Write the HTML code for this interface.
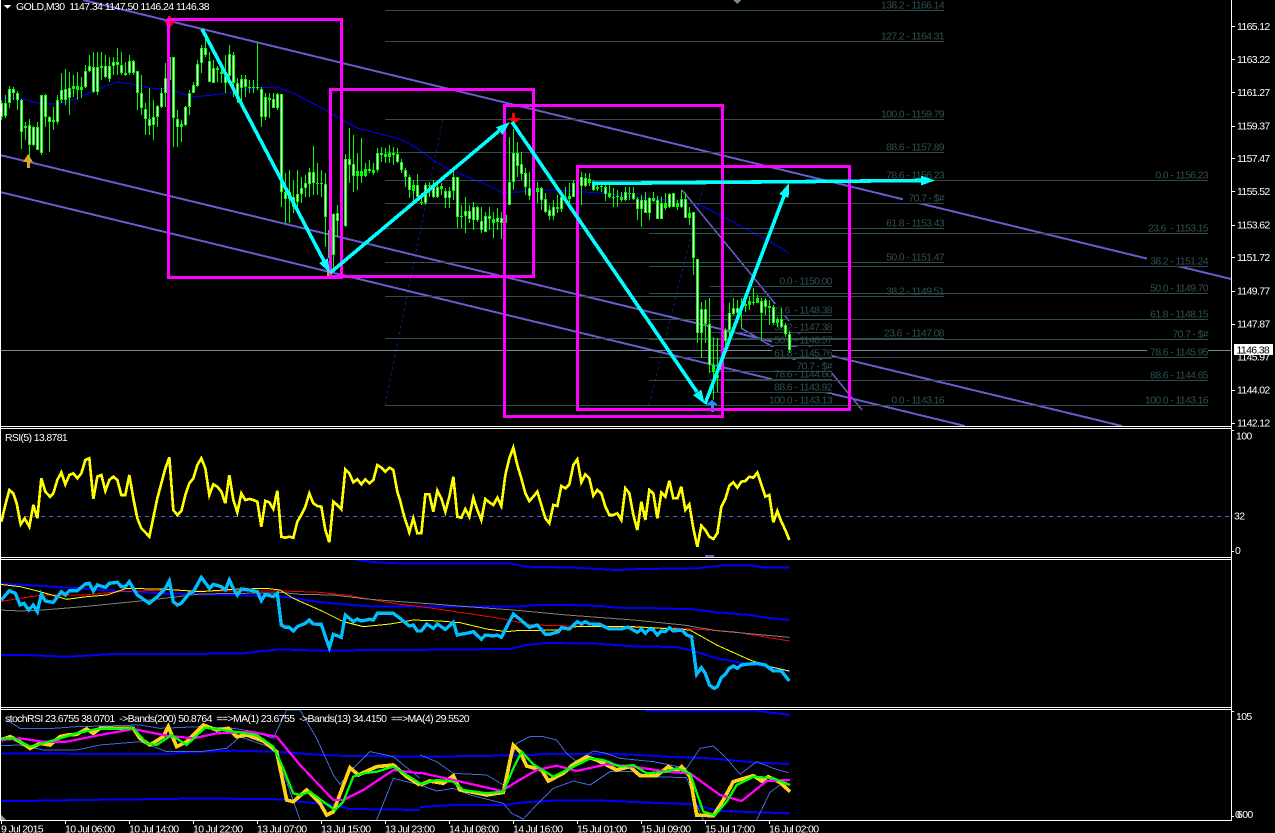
<!DOCTYPE html>
<html><head><meta charset="utf-8"><title>GOLD,M30</title>
<style>
html,body{margin:0;padding:0;background:#000;overflow:hidden}
svg{display:block}
text{font-family:"Liberation Sans",sans-serif;font-size:10.5px;letter-spacing:-.65px;fill:#fff;white-space:pre}
.f text{fill:#2F4F4F}
.f rect{fill:#000}
.e text{text-anchor:end}
path,polyline,line{fill:none}
</style></head><body>
<svg width="1275" height="833" viewBox="0 0 1275 833" xmlns="http://www.w3.org/2000/svg" shape-rendering="crispEdges">
<defs>
<clipPath id="m"><rect x="1" y="0" width="1230" height="426"/></clipPath>
</defs>
<rect width="1275" height="833" fill="#000"/>
<g clip-path="url(#m)">
<!-- dotted fan lines -->
<g stroke="#191970" stroke-dasharray="3 3" fill="none">
<path d="M385 405L443 119"/><path d="M649 405L703 187"/><path d="M712 405L732 287"/>
</g>
<!-- MA line -->
<polyline stroke="#0000ff" points="0,98 20,98 37,103 53,104 67,102 80,97 100,88 117,82 133,84 150,88 163,89 177,92 193,97 213,95 233,92 253,88 277,87 293,93 320,107 337,117 357,128 377,133 400,139 417,148 433,160 450,170 483,183 503,193 533,191 550,190 600,193 633,197 667,200 700,205 733,222 767,240 789,253"/>
<!-- channels -->
<g stroke="#6A5ACD" stroke-width="2">
<line x1="83" y1="0" x2="1231" y2="279"/>
<line x1="0" y1="155" x2="1122" y2="426"/>
<line x1="0" y1="192" x2="965" y2="426"/>
<line stroke-width="1.6" x1="682" y1="190" x2="862" y2="410"/>
<line stroke-width="1.6" x1="741" y1="328" x2="805" y2="366"/>
</g>
<g stroke="#0000ff"><path d="M797 334h3M808 347h3"/></g>
<!-- price line -->
<line x1="0" y1="350.5" x2="1231" y2="350.5" stroke="#778899"/>
<!-- fib labels backgrounds + text -->
<g class="f">
<rect x="879" y="0" width="65" height="10"/><rect x="879" y="30" width="65" height="11"/><rect x="879" y="108" width="65" height="11"/><rect x="884" y="141" width="60" height="11"/><rect x="884" y="169" width="60" height="11"/><rect x="903" y="192" width="41" height="11"/><rect x="884" y="217" width="60" height="11"/><rect x="884" y="251" width="60" height="11"/><rect x="884" y="285" width="60" height="11"/><rect x="881" y="327" width="63" height="11"/><rect x="888" y="394" width="56" height="11"/>
<rect x="1153" y="169" width="55" height="11"/><rect x="1145" y="222" width="63" height="11"/><rect x="1147" y="255" width="61" height="11"/><rect x="1147" y="282" width="61" height="11"/><rect x="1147" y="308" width="61" height="11"/><rect x="1167" y="328" width="41" height="11"/><rect x="1147" y="346" width="61" height="11"/><rect x="1147" y="369" width="61" height="11"/><rect x="1143" y="394" width="65" height="11"/>
<rect x="777" y="275" width="55" height="11"/><rect x="772" y="304" width="60" height="11"/><rect x="772" y="321" width="60" height="11"/><rect x="772" y="334" width="60" height="11"/><rect x="772" y="347" width="60" height="11"/><rect x="791" y="360" width="41" height="11"/><rect x="772" y="368" width="60" height="11"/><rect x="772" y="381" width="60" height="11"/><rect x="767" y="394" width="65" height="11"/>
<g stroke="#2F4F4F" fill="none">
<path d="M385 10.5H944M385 41.5H944M385 119.5H944M385 152.5H944M385 180.5H944M385 203.5H944M385 228.5H944M385 262.5H944M385 296.5H944M385 338.5H944M385 405.5H944"/>
<path d="M649 180.5H1208M649 233.5H1208M649 266.5H1208M649 293.5H1208M649 319.5H1208M649 339.5H1208M649 357.5H1208M649 380.5H1208M649 405.5H1208"/>
<path d="M710 286.5H832M710 315.5H832M710 332.5H832M710 345.5H832M710 358.5H832M710 371.5H832M710 379.5H832M710 392.5H832M710 405.5H832"/>
</g>
<g class="e">
<text x="944" y="8.5">138.2 - 1166.14</text><text x="944" y="39.5">127.2 - 1164.31</text><text x="944" y="117.5">100.0 - 1159.79</text><text x="944" y="150.5">88.6 - 1157.89</text><text x="944" y="178.5">78.6 - 1156.23</text><text x="944" y="201.5">70.7 - $#</text><text x="944" y="226.5">61.8 - 1153.43</text><text x="944" y="260.5">50.0 - 1151.47</text><text x="944" y="294.5">38.2 - 1149.51</text><text x="944" y="336.5">23.6  - 1147.08</text><text x="944" y="403.5">0.0 - 1143.16</text>
<text x="1208" y="178.5">0.0 - 1156.23</text><text x="1208" y="231.5">23.6  - 1153.15</text><text x="1208" y="264.5">38.2 - 1151.24</text><text x="1208" y="291.5">50.0 - 1149.70</text><text x="1208" y="317.5">61.8 - 1148.15</text><text x="1208" y="337.5">70.7 - $#</text><text x="1208" y="355.5">78.6 - 1145.95</text><text x="1208" y="378.5">88.6 - 1144.65</text><text x="1208" y="403.5">100.0 - 1143.16</text>
<text x="832" y="284.5">0.0 - 1150.00</text><text x="832" y="313.5">23.6  - 1148.38</text><text x="832" y="330.5">38.2 - 1147.38</text><text x="832" y="343.5">50.0 - 1146.57</text><text x="832" y="356.5">61.8 - 1145.76</text><text x="832" y="369.5">70.7 - $#</text><text x="832" y="377.5">78.6 - 1144.60</text><text x="832" y="390.5">88.6 - 1143.92</text><text x="832" y="403.5">100.0 - 1143.13</text>
</g>
</g>
<!-- wicks -->
<path stroke="#00ff00" stroke-width="1" d="M1.5 100V120M5.5 95V118M9.5 86V108M13.5 87V100M17.5 91V110M21.5 99V149M25.5 122V140M29.5 119V157M33.5 126V146M37.5 122V150M41.5 95V155M45.5 94V127M49.5 116V152M53.5 107V130M57.5 95V124M61.5 73V103M65.5 69V105M69.5 72V115M73.5 75V97M77.5 72V100M81.5 77V98M85.5 65V88M89.5 55V72M93.5 52V93M97.5 52V95M101.5 52V80M105.5 55V78M109.5 57V82M113.5 57V75M117.5 48V75M121.5 52V75M125.5 62V76M129.5 55V75M133.5 60V75M137.5 71V110M141.5 75V115M145.5 103V135M149.5 88V135M153.5 100V140M157.5 105V127M161.5 88V108M165.5 63V107M169.5 57V100M173.5 57V147M177.5 110V147M181.5 120V142M185.5 106V126M189.5 90V115M193.5 82V93M197.5 60V87M201.5 45V73M205.5 35V57M209.5 52V82M213.5 60V83M217.5 66V82M221.5 62V83M225.5 55V93M229.5 45V83M233.5 52V97M237.5 78V103M241.5 75V103M245.5 75V97M249.5 80V93M253.5 80V93M257.5 43V90M261.5 87V127M265.5 93V120M269.5 93V118M273.5 93V108M277.5 93V110M281.5 94V207M285.5 173V223M289.5 170V223M293.5 180V213M297.5 170V207M301.5 177V203M305.5 175V197M309.5 168V197M313.5 146V195M317.5 163V195M321.5 170V197M325.5 173V247M329.5 200V260M333.5 213V268M337.5 205V237M341.5 200V230M345.5 154V227M349.5 128V183M353.5 135V192M357.5 153V190M361.5 138V183M365.5 163V177M369.5 160V173M373.5 163V175M377.5 148V172M381.5 147V162M385.5 148V163M389.5 145V163M393.5 147V165M397.5 148V163M401.5 159V173M405.5 168V187M409.5 175V198M413.5 180V202M417.5 174V201M421.5 193V205M425.5 183V205M429.5 182V197M433.5 180V198M437.5 182V198M441.5 183V195M445.5 188V208M449.5 187V208M453.5 168V200M457.5 177V228M461.5 205V228M465.5 197V233M469.5 205V223M473.5 202V230M477.5 206V222M481.5 207V233M485.5 212V232M489.5 207V230M493.5 212V238M497.5 208V230M501.5 212V239M505.5 205V223M509.5 137V205M513.5 129V190M517.5 142V177M521.5 152V180M525.5 168V195M529.5 172V200M533.5 190V205M537.5 182V203M541.5 187V210M545.5 193V213M549.5 205V220M553.5 200V220M557.5 195V213M561.5 193V212M565.5 187V200M569.5 183V204M573.5 180V197M577.5 175V195M581.5 172V205M585.5 173V187M589.5 173V186M593.5 180V191M597.5 184V191M601.5 184V192M605.5 185V201M609.5 185V198M613.5 188V207M617.5 190V207M621.5 192V202M625.5 187V201M629.5 187V200M633.5 187V200M637.5 197V220M641.5 195V227M645.5 192V213M649.5 197V220M653.5 192V202M657.5 196V219M661.5 197V219M665.5 193V210M669.5 193V208M673.5 193V207M677.5 200V210M681.5 190V208M685.5 193V218M689.5 207V225M693.5 212V275M697.5 259V343M701.5 302V358M705.5 300V343M709.5 298V373M713.5 337V400M717.5 338V392M721.5 338V370M725.5 328V345M729.5 303V340M733.5 298V315M737.5 300V315M741.5 298V328M745.5 293V312M749.5 296V310M753.5 288V305M757.5 295V303M761.5 298V340M765.5 298V315M769.5 300V325M773.5 305V325M777.5 317V327M781.5 308V328M785.5 323V337M789.5 331V353"/>
<!-- bodies -->
<path id="bd" stroke="#00ff00" stroke-width="3" d="M1.5 103V117M5.5 103V116M9.5 89V103M13.5 89V93M17.5 93V100M21.5 100V132M25.5 126V128M29.5 125V145M33.5 127V145M37.5 127V150M41.5 95V153M45.5 95V117M49.5 117V122M53.5 120V122M57.5 100V122M61.5 90V100M65.5 89V100M69.5 88V98M73.5 86V89M77.5 86V90M81.5 87V90M85.5 71V87M89.5 66V71M93.5 67V92M97.5 67V92M101.5 66V68M105.5 66V77M109.5 66V79M113.5 62V66M117.5 62V65M121.5 65V73M125.5 73V75M129.5 61V73M133.5 61V73M137.5 71V93M141.5 93V108M145.5 109V119M149.5 119V126M153.5 117V125M157.5 106V117M161.5 93V107M165.5 78V93M169.5 57V80M173.5 57V118M177.5 119V127M181.5 124V127M185.5 107V125M189.5 93V107M193.5 85V93M197.5 64V86M201.5 48V63M205.5 48V55M209.5 61V82M213.5 68V83M217.5 68V70M221.5 72V74M225.5 76V83M229.5 54V76M233.5 55V83M237.5 83V99M241.5 79V88M245.5 79V87M249.5 87V88M253.5 87V88M257.5 87V88M261.5 89V117M265.5 97V117M269.5 98V100M273.5 99V108M277.5 94V108M281.5 94V192M285.5 192V199M289.5 192V199M293.5 197V207M297.5 194V202M301.5 188V194M305.5 183V188M309.5 172V184M313.5 172V183M317.5 183V184M321.5 183V184M325.5 184V217M329.5 230V258M333.5 214V255M337.5 213V221M341.5 215V225M345.5 159V226M349.5 159V165M353.5 164V176M357.5 171V176M361.5 171V176M365.5 169V176M369.5 169V171M373.5 170V173M377.5 153V170M381.5 153V155M385.5 154V157M389.5 153V157M393.5 153V155M397.5 154V162M401.5 162V170M405.5 170V177M409.5 177V190M413.5 185V191M417.5 185V197M421.5 202V203M425.5 185V203M429.5 185V186M433.5 186V197M437.5 187V197M441.5 186V189M445.5 191V198M449.5 191V198M453.5 177V191M457.5 177V217M461.5 216V217M465.5 211V216M469.5 211V219M473.5 207V220M477.5 207V220M481.5 221V230M485.5 216V232M489.5 216V219M493.5 219V223M497.5 218V222M501.5 218V223M505.5 215V223M509.5 182V205M513.5 153V182M517.5 153V166M521.5 164V174M525.5 173V187M529.5 188V196M533.5 195V200M537.5 188V192M541.5 188V200M545.5 199V212M549.5 210V216M553.5 207V216M557.5 207V209M561.5 197V209M565.5 197V198M569.5 196V199M573.5 183V197M577.5 180V190M581.5 177V186M585.5 178V186M589.5 179V183M593.5 183V190M597.5 187V189M601.5 186V187M605.5 187V194M609.5 193V197M613.5 197V198M617.5 196V197M621.5 197V200M625.5 192V200M629.5 193V194M633.5 193V199M637.5 199V209M641.5 200V209M645.5 200V213M649.5 198V213M653.5 198V201M657.5 200V219M661.5 203V219M665.5 203V208M669.5 194V207M673.5 193V207M677.5 203V207M681.5 199V207M685.5 199V218M689.5 213V218M693.5 212V258M697.5 259V333M701.5 309V333M705.5 309V324M709.5 324V365M713.5 365V372M717.5 375V378M721.5 365V370M725.5 330V341M729.5 313V330M733.5 308V314M737.5 308V313M741.5 307V309M745.5 304V306M749.5 301V305M753.5 302V303M757.5 298V303M761.5 301V313M765.5 300V307M769.5 306V308M773.5 307V323M777.5 319V323M781.5 319V327M785.5 325V334M789.5 334V350"/>
<path stroke="#ffffff" stroke-width="1" d="M1.5 104V116M5.5 104V115M9.5 90V102M13.5 90V92M17.5 94V99M21.5 101V131M29.5 126V144M33.5 128V144M37.5 128V149M41.5 96V152M45.5 96V116M49.5 118V121M57.5 101V121M61.5 91V99M65.5 90V99M69.5 89V97M85.5 72V86M89.5 67V70M93.5 68V91M97.5 68V91M105.5 67V76M109.5 67V78M113.5 63V65M117.5 63V64M121.5 66V72M129.5 62V72M133.5 62V72M137.5 72V92M141.5 94V107M145.5 110V118M149.5 120V125M153.5 118V124M157.5 107V116M161.5 94V106M165.5 79V92M169.5 58V79M173.5 58V117M177.5 120V126M185.5 108V124M189.5 94V106M193.5 86V92M197.5 65V85M201.5 49V62M205.5 49V54M209.5 62V81M213.5 69V82M225.5 77V82M229.5 55V75M233.5 56V82M237.5 84V98M241.5 80V87M245.5 80V86M261.5 90V116M265.5 98V116M273.5 100V107M277.5 95V107M281.5 95V191M285.5 193V198M289.5 193V198M293.5 198V206M297.5 195V201M301.5 189V193M305.5 184V187M309.5 173V183M313.5 173V182M325.5 185V216M333.5 215V254M337.5 214V220M345.5 160V225M349.5 160V164M353.5 165V175M377.5 154V169M397.5 155V161M401.5 163V169M405.5 171V176M409.5 178V189M417.5 186V196M425.5 186V202M433.5 187V196M437.5 188V196M445.5 192V197M449.5 192V197M453.5 178V190M457.5 178V216M465.5 212V215M469.5 212V218M473.5 208V219M477.5 208V219M481.5 222V229M485.5 217V231M489.5 217V218M497.5 219V221M501.5 219V222M505.5 216V222M509.5 183V204M513.5 154V181M517.5 154V165M521.5 165V173M525.5 174V186M529.5 189V195M541.5 189V199M545.5 200V211M549.5 211V215M553.5 208V215M561.5 198V208M573.5 184V196M581.5 178V185M585.5 179V185M593.5 184V189M605.5 188V193M625.5 193V199M633.5 194V198M637.5 200V208M641.5 201V208M645.5 201V212M649.5 199V212M657.5 201V218M661.5 204V218M669.5 195V206M673.5 194V206M681.5 200V206M685.5 200V217M693.5 213V257M697.5 260V332M701.5 310V332M705.5 310V323M709.5 325V364M725.5 331V340M729.5 314V329M733.5 309V313M737.5 309V312M761.5 302V312M765.5 301V306M773.5 308V322M781.5 320V326M785.5 326V333M789.5 335V349"/>
<!-- arrow markers -->
<g fill="#DAA520" stroke="none"><polygon points="28,154 23,162 33,162"/><rect x="27" y="162" width="3" height="6"/><rect x="327" y="268" width="3" height="9"/></g>
<g fill="#ff0000" stroke="none"><polygon points="164,21 175,21 169.5,29"/><rect x="168" y="16" width="3" height="6"/><polygon points="508,118 520,118 514,124"/><rect x="512" y="113" width="3" height="6"/></g>
<g fill="#1E90FF" stroke="none"><polygon points="712,400 718,405 706,405"/><rect x="711" y="405" width="3" height="7"/></g>
<polygon fill="#778899" points="733,0 741,0 737,4"/>
<!-- magenta boxes -->
<g stroke="#ff00ff" stroke-width="3" fill="none">
<rect x="168.5" y="19.5" width="173" height="258"/>
<rect x="330.5" y="89.5" width="203" height="187"/>
<rect x="504.5" y="105.5" width="218" height="311"/>
<rect x="577.5" y="166.5" width="272" height="243"/>
</g>
<!-- cyan arrows -->
<g stroke="#00ffff" stroke-width="3.6" fill="none">
<line x1="202" y1="29" x2="324" y2="261"/>
<line x1="330" y1="273" x2="499" y2="131"/>
<line x1="512" y1="122" x2="697" y2="392"/>
<line x1="705" y1="404" x2="784" y2="196"/>
<line x1="592" y1="183.5" x2="921" y2="180.5"/>
</g>
<g fill="#00ffff" stroke="none">
<polygon points="330,273 327.9,258.3 319.1,262.9"/>
<polygon points="510,122 502.5,134.8 496.1,127.2"/>
<polygon points="705,404 701.2,389.6 693,395.2"/>
<polygon points="789,183 788.7,197.9 779.3,194.3"/>
<polygon points="935,180.5 921,175.5 921,185.5"/>
</g>
</g>
<!-- title -->
<polygon fill="#fff" points="4,5 11,5 7.5,9"/>
<text x="16" y="10" textLength="193" xml:space="preserve">GOLD,M30  1147.34 1147.50 1146.24 1146.38</text>
<!-- RSI -->
<line x1="1" y1="516.5" x2="1231" y2="516.5" stroke="#4169E1" stroke-dasharray="4 4"/>
<polygon fill="#6A5ACD" points="705,555 714,555 714,557 705,557"/>
<g transform="translate(0 425) scale(.33333)" stroke="#ffff00" stroke-width="8" fill="none">
<polyline points="4,290 16,240 28,195 40,205 50,235 62,298 74,280 88,305 100,240 112,280 124,160 136,200 150,215 160,205 172,165 184,142 196,178 208,150 220,145 232,160 244,145 256,105 268,100 280,222 292,155 304,150 316,198 328,165 340,155 352,165 364,210 376,210 388,150 400,220 412,280 424,310 436,322 448,335 472,220 496,130 508,97 520,255 532,270 544,258 556,210 568,175 580,160 592,120 604,100 616,130 628,210 640,178 652,185 664,200 676,235 688,150 700,225 712,262 724,205 736,225 748,222 760,225 772,230 784,305 796,228 808,232 820,252 832,197 844,335 856,338 868,335 880,338 892,290 904,270 916,245 928,205 940,235 952,243 964,245 976,315 988,352 1000,230 1012,240 1024,253 1036,133 1048,145 1060,172 1072,163 1084,178 1096,163 1108,175 1120,165 1132,120 1144,128 1156,140 1168,128 1180,135 1192,200 1200,225"/>
</g>
<g transform="translate(400 425) scale(.33333)" stroke="#ffff00" stroke-width="8" fill="none">
<polyline points="0,225 12,272 28,322 40,280 52,325 64,325 76,208 88,208 100,260 112,197 124,220 136,260 148,215 160,155 172,275 184,278 196,252 208,275 220,218 232,255 244,285 256,222 268,232 280,240 292,218 304,243 316,150 328,100 340,68 352,120 364,160 376,205 388,228 400,215 412,200 424,240 436,280 448,295 460,240 472,243 484,183 496,190 508,178 520,120 532,103 544,172 556,148 568,160 580,212 592,195 604,205 616,245 628,270 640,270 652,265 664,285 676,190 688,205 700,270 712,315 724,230 736,285 748,195 760,205 772,280 784,203 796,215 808,167 820,220 832,220 844,185 856,255 868,238 880,310 892,365 904,302 916,315 928,335 940,342 952,325 964,245 976,222 988,182 1000,172 1012,188 1024,170 1036,168 1048,155 1060,158 1072,143 1084,178 1096,215 1108,210 1120,292 1132,258 1144,290 1156,315 1168,345"/>
</g>
<text x="5" y="441">RSI(5) 13.8781</text>
<!-- Panel 2 -->
<g transform="translate(0 425) scale(.33333)" fill="none">
<g stroke="#0000ff" stroke-width="6">
<polyline points="1070,405 1130,412 1200,415"/>
<polyline points="0,476 130,483 240,490 300,495 400,500 500,505 600,508 700,510 850,515 950,530 1050,540 1130,545 1200,545"/>
<polyline points="0,690 70,690 200,695 260,692 340,687 720,686 790,678 840,673 960,677 1130,675 1200,675"/>
</g>
<polyline stroke="#ff0000" stroke-width="3" points="0,530 60,520 130,510 250,510 360,500 500,495 600,498 850,498 960,502 1050,512 1150,530 1200,538"/>
<polyline stroke="#808080" stroke-width="3" points="0,555 60,558 130,555 250,545 350,535 450,525 600,507 850,503 900,508 1000,510 1100,522 1200,530"/>
<polyline stroke="#ffff00" stroke-width="3" points="0,478 60,485 120,500 200,523 260,515 320,510 380,490 500,493 600,500 700,493 800,490 840,495 880,520 970,560 1030,590 1090,605 1170,597 1200,592"/>
<polyline stroke="#00BFFF" stroke-width="10" points="4,525 28,497 46,505 60,540 72,535 86,555 100,540 112,560 124,507 136,528 160,532 184,500 196,510 208,497 232,497 256,477 268,475 280,498 292,480 316,487 328,475 352,472 364,485 376,485 388,470 412,510 448,535 472,515 496,490 508,468 520,530 532,540 544,535 568,505 580,500 604,457 628,490 640,478 664,485 676,495 688,465 700,490 712,510 724,492 748,495 772,500 784,527 796,508 820,515 832,505 844,600 856,607 868,607 880,618 892,605 916,595 928,585 940,597 964,598 976,635 988,668 1000,628 1024,637 1036,570 1060,590 1072,582 1084,588 1108,583 1120,585 1132,565 1180,565 1200,580"/>
</g>
<g transform="translate(400 425) scale(.33333)" fill="none">
<g stroke="#0000ff" stroke-width="6">
<polyline points="0,415 330,415 380,425 520,428 650,435 720,432 890,430 960,422 1060,422 1090,428 1168,428"/>
<polyline points="0,545 340,545 420,540 500,540 600,543 650,548 780,550 880,553 950,562 1050,570 1100,578 1168,585"/>
<polyline points="0,675 330,672 380,660 440,654 590,656 700,664 830,666 880,678 950,700 1050,718 1100,723 1168,740"/>
</g>
<polyline stroke="#ff0000" stroke-width="3" points="0,538 100,550 200,565 300,580 400,600 600,605 850,610 1000,620 1168,648"/>
<polyline stroke="#808080" stroke-width="3" points="0,530 100,537 200,545 340,555 500,570 700,585 850,600 950,617 1168,637"/>
<polyline stroke="#ffff00" stroke-width="3" points="0,592 40,585 120,588 180,593 260,612 320,620 350,617 470,615 530,605 700,605 870,615 950,660 1050,705 1100,723 1168,738"/>
<polyline stroke="#00BFFF" stroke-width="10" points="0,580 28,603 40,600 52,618 64,618 80,597 100,610 112,597 136,613 160,592 172,630 208,623 220,620 244,643 256,630 280,633 292,630 304,637 340,567 360,583 388,607 412,600 436,628 448,628 476,620 484,608 508,612 532,590 544,597 556,590 568,597 600,598 628,612 664,612 684,606 712,622 724,612 736,625 748,612 760,615 772,630 784,618 796,620 808,608 820,618 845,615 860,630 875,635 890,748 904,728 916,745 928,780 942,790 952,785 964,758 976,748 988,730 1000,723 1012,730 1024,720 1048,717 1072,715 1096,720 1120,738 1144,738 1168,768"/>
</g>
<!-- Panel 3 -->
<svg x="0" y="710" width="1231" height="110" viewBox="0 710 1231 110" overflow="hidden">
<g transform="translate(0 705) scale(.33333)" fill="none">
<g stroke="#0000ff" stroke-width="6">
<polyline points="4,145 120,145 260,147 420,147 500,147 560,142 700,137 820,140 1000,152 1260,155"/>
<polyline points="4,288 150,287 230,285 500,282 600,280 840,283 900,290 1000,300 1050,312 1260,315"/>
</g>
<g stroke="#4169E1" stroke-width="3">
<polyline points="20,45 60,70 160,70 230,65 350,62 420,60 480,70 600,65 700,70 760,80 820,100 860,15 900,15 950,100 1000,210 1020,238 1060,190 1110,140 1180,155 1260,220"/>
<polyline points="0,122 60,120 130,135 230,135 300,120 420,110 500,140 600,140 680,130 720,95 820,130 860,230 900,345"/>
<polyline points="1130,345 1180,220 1260,240"/>
</g>
<polyline stroke="#FFD21A" stroke-width="11" points="4,105 30,95 60,110 90,130 120,115 150,120 180,95 205,90 230,88 260,72 280,85 300,70 330,70 400,70 420,100 450,120 490,95 505,65 530,125 560,110 610,60 650,75 685,70 710,95 740,90 790,108 830,140 860,285 880,290 920,255 960,295 980,330 1000,320 1050,188 1075,210 1130,185 1180,180 1220,215 1260,240"/>
<polyline stroke="#ff00ff" stroke-width="7" points="4,105 60,100 130,110 200,110 300,90 400,72 500,92 580,100 650,85 750,80 830,95 900,180 1000,285 1030,285 1090,255 1180,195 1260,205"/>
<polyline stroke="#00ff00" stroke-width="7" points="4,100 40,100 90,125 130,115 180,100 230,85 290,72 400,70 440,115 470,120 515,90 560,120 615,68 690,78 770,90 820,125 850,190 880,265 900,270 930,260 970,290 1005,315 1030,290 1060,215 1090,205 1130,200 1180,185 1260,235"/>
</g>
<g transform="translate(420 705) scale(.33333)" fill="none">
<g stroke="#0000ff" stroke-width="6">
<polyline points="675,16 830,16 920,16 1010,17 1070,25 1110,30"/>
<polyline points="0,155 180,153 340,150 360,147 600,147 740,155 870,160 1000,172 1110,178"/>
<polyline points="0,306 100,300 250,300 310,292 400,287 550,287 740,295 810,297 900,318 1020,322 1110,325"/>
</g>
<g stroke="#4169E1" stroke-width="3">
<polyline points="0,150 50,170 100,205 200,210 250,240 290,115 330,95 370,95 410,105 440,145 470,170 520,138 560,145 600,160 700,170 800,190 840,130 880,123 920,160 960,208 1010,170 1060,190 1105,203"/>
<polyline points="0,240 50,258 100,250 150,270 250,295 275,325 310,342 340,310 400,250 460,228 510,240 570,200 640,200 700,215 800,218 830,300 850,345"/>
<polyline points="1010,345 1050,262 1080,240 1110,255"/>
</g>
<polyline stroke="#FFD21A" stroke-width="11" points="0,240 30,228 70,235 100,212 120,255 160,262 200,270 250,262 280,120 300,140 320,183 365,195 385,228 430,205 460,178 500,155 530,165 560,180 590,195 630,185 660,212 710,212 745,185 770,200 785,185 810,215 830,330 880,332 910,285 940,230 1000,212 1025,228 1045,215 1080,232 1110,260"/>
<polyline stroke="#ff00ff" stroke-width="7" points="0,203 100,225 245,258 290,230 350,195 410,182 470,198 560,178 640,185 740,200 810,205 900,270 965,288 1040,228 1110,225"/>
<polyline stroke="#00ff00" stroke-width="7" points="0,238 50,225 100,230 130,255 200,265 250,260 280,190 305,140 340,178 400,215 450,190 510,160 550,165 600,185 640,180 680,205 740,200 770,190 810,205 850,320 885,330 920,290 950,240 1000,215 1060,220 1110,240"/>
</g>
</svg>
<text x="5" y="722" textLength="464" xml:space="preserve">stochRSI 23.6755 38.0701  ->Bands(200) 50.8764  ==>MA(1) 23.6755  ->Bands(13) 34.4150  ==>MA(4) 29.5520</text>
<polygon fill="#999" points="1,815 1,820 6,820"/>
<!-- frames -->
<g stroke="#fff" stroke-width="1" fill="none">
<path d="M0 426.5H1231M0 428.5H1231M0 557.5H1231M0 559.5H1231M0 707.5H1231M0 709.5H1231M0 820.5H1231"/>
<path d="M1231.5 0V821M.5 0V821"/>
<path d="M1232 26.5h3M1232 59.5h3M1232 92.5h3M1232 126.5h3M1232 158.5h3M1232 191.5h3M1232 225.5h3M1232 257.5h3M1232 291.5h3M1232 324.5h3M1232 390.5h3M1232 423.5h3M1232 430.5h2M1232 551.5h2M1232 711.5h2M1232 816.5h2"/>
<path d="M1.5 821v3M65.5 821v3M129.5 821v3M193.5 821v3M257.5 821v3M321.5 821v3M385.5 821v3M449.5 821v3M513.5 821v3M577.5 821v3M641.5 821v3M705.5 821v3M769.5 821v3"/>
</g>
<!-- price axis -->
<g>
<text x="1237" y="30">1165.12</text><text x="1237" y="63">1163.22</text><text x="1237" y="96">1161.27</text><text x="1237" y="129.5">1159.37</text><text x="1237" y="162">1157.47</text><text x="1237" y="195">1155.52</text><text x="1237" y="228.5">1153.62</text><text x="1237" y="261">1151.72</text><text x="1237" y="294.5">1149.77</text><text x="1237" y="327.5">1147.87</text><text x="1237" y="360.5">1145.97</text><text x="1237" y="393.5">1144.02</text><text x="1237" y="426.5">1142.12</text>
<rect x="1234" y="344" width="39" height="11" fill="#fff"/>
<text x="1236.5" y="353.5" style="fill:#000">1146.38</text>
<text x="1236" y="439.5">100</text><text x="1234" y="519.5">32</text><text x="1235" y="554">0</text>
<text x="1236" y="720">105</text><text x="1235" y="818">0</text><text x="1237" y="818">600</text>
</g>
<!-- time axis -->
<g>
<text x="1" y="832.5">9 Jul 2015</text><text x="65" y="832.5">10 Jul 06:00</text><text x="129" y="832.5">10 Jul 14:00</text><text x="193" y="832.5">10 Jul 22:00</text><text x="257" y="832.5">13 Jul 07:00</text><text x="321" y="832.5">13 Jul 15:00</text><text x="385" y="832.5">13 Jul 23:00</text><text x="449" y="832.5">14 Jul 08:00</text><text x="513" y="832.5">14 Jul 16:00</text><text x="577" y="832.5">15 Jul 01:00</text><text x="641" y="832.5">15 Jul 09:00</text><text x="705" y="832.5">15 Jul 17:00</text><text x="769" y="832.5">16 Jul 02:00</text>
</g>
</svg>
</body></html>
